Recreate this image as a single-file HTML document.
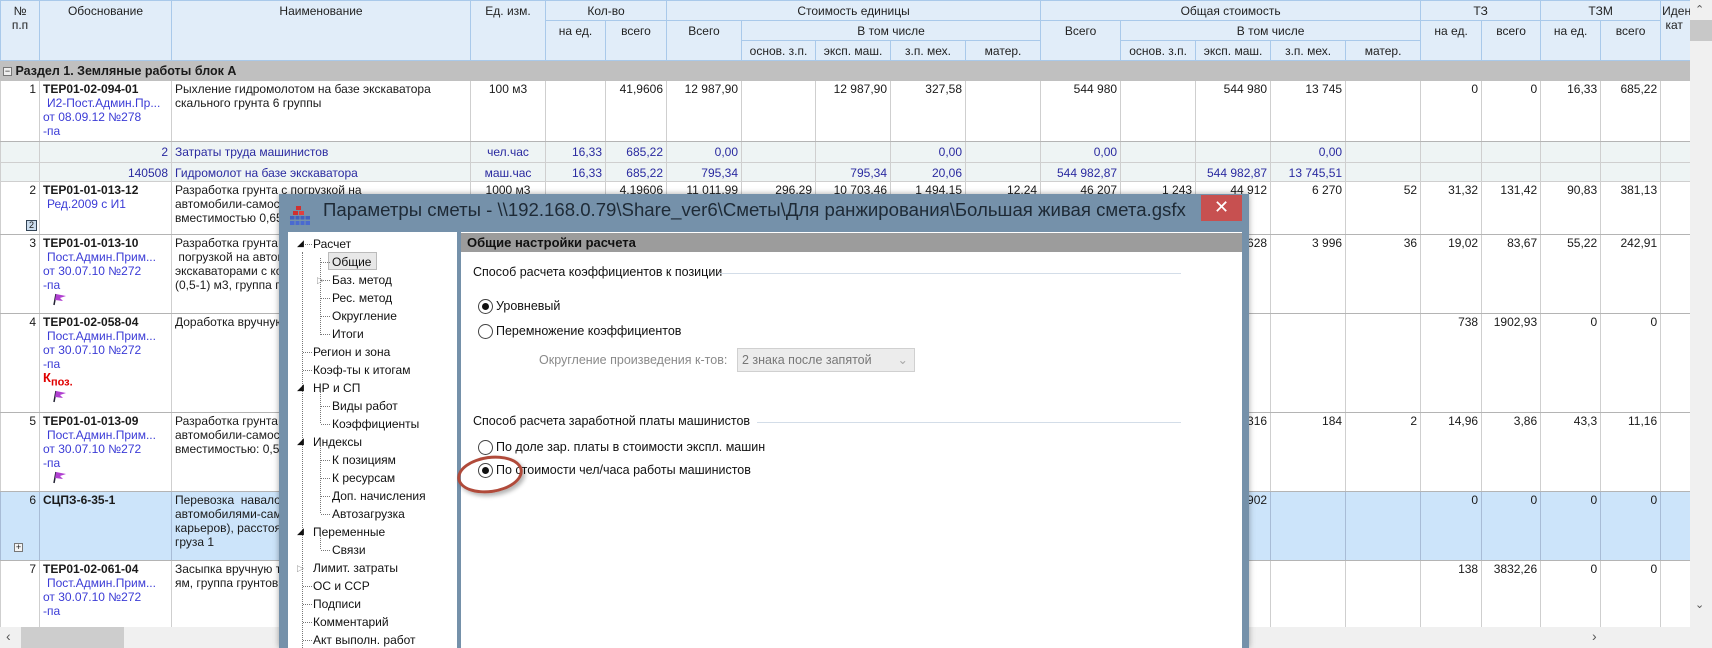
<!DOCTYPE html>
<html><head><meta charset="utf-8">
<style>
*{box-sizing:border-box;margin:0;padding:0}
html{width:1712px;height:648px;overflow:hidden}
body{width:1712px;height:648px;overflow:hidden;background:#fff;position:relative;font-family:"Liberation Sans","DejaVu Sans",sans-serif;font-size:12px;color:#1a1a1a}
table.g{position:absolute;left:0;top:0;border-collapse:collapse;table-layout:fixed;width:1690px}
table.g td,table.g th{border:1px solid #cfcfcf;padding:1px 3px;vertical-align:top;overflow:hidden;white-space:nowrap;line-height:14px}
table.g th{background:#e1edf9;border:1px solid #a9c9ea;font-weight:normal;text-align:center;color:#222;padding-top:3px}
tr.hd{height:20px}
td.r{text-align:right}
td.c{text-align:center}
.b{font-weight:bold}
.bl{color:#3b3bd6;padding-left:4px}
tr.sec td{background:#c0c0c0;font-weight:bold;font-size:12.5px;padding-top:3px;border-color:#c0c0c0}
tr.res td{background:#eef4f4;color:#2a2aa0;padding-top:3px}
tr.sel td{background:#cce4fa;border-color:#a8bcd6}
tr.main td{border-top:1px solid #b4b4b4;border-bottom:1px solid #b4b4b4}
.gr{color:#999}
.vs{position:absolute;left:1690px;top:0;width:22px;height:628px;background:#f0f0f0}
.hs{position:absolute;left:0;top:627px;width:1712px;height:21px;background:#f0f0f0}
.dlg{position:absolute;left:279px;top:194px;width:970px;height:454px;background:#7591aa;box-shadow:0 0 6px rgba(0,0,0,.35);overflow:hidden}
.ttl{position:absolute;left:44px;top:5px;font-size:18.6px;color:#1e2a36;white-space:nowrap}
.cls{position:absolute;left:922px;top:1px;width:41px;height:26px;background:#c75050;color:#fff;text-align:center;font-size:18px;line-height:25px;font-weight:bold}
.tree{position:absolute;left:9px;top:38px;width:169px;height:440px;background:#fff}
.rp{position:absolute;left:182px;top:38px;width:781px;height:440px;background:#fff}
.rph{position:absolute;left:0;top:1px;width:781px;height:19px;background:#9c9c9c;font-weight:bold;font-size:13px;padding:2px 6px;color:#111}
.ti{position:absolute;white-space:nowrap;font-size:12px;line-height:16px;color:#111}
.dv{position:absolute;border-left:1px dotted #777;width:0}
.dh{position:absolute;border-top:1px dotted #777;height:0}
.rad{position:absolute;width:15px;height:15px;border:1px solid #444;border-radius:50%;background:#fff}
.rad.on::after{content:"";position:absolute;left:3px;top:3px;width:7px;height:7px;border-radius:50%;background:#111}
.lbl{position:absolute;white-space:nowrap;font-size:12.5px;color:#111}
</style></head><body>

<table class="g">
<colgroup>
<col style="width:39px"><col style="width:132px"><col style="width:299px"><col style="width:75px"><col style="width:60px"><col style="width:61px"><col style="width:75px"><col style="width:74px"><col style="width:75px"><col style="width:75px"><col style="width:75px"><col style="width:80px"><col style="width:75px"><col style="width:75px"><col style="width:75px"><col style="width:75px"><col style="width:61px"><col style="width:59px"><col style="width:60px"><col style="width:60px"><col style="width:30px">
</colgroup>
<tr class="hd"><th rowspan="3">№<br>п.п</th><th rowspan="3">Обоснование</th><th rowspan="3">Наименование</th><th rowspan="3">Ед. изм.</th><th colspan="2">Кол-во</th><th colspan="5">Стоимость единицы</th><th colspan="5">Общая стоимость</th><th colspan="2">ТЗ</th><th colspan="2">ТЗМ</th><th rowspan="3" style="text-align:left;padding-left:1px">Иден<br>&nbsp;кат</th></tr>
<tr class="hd"><th rowspan="2">на ед.</th><th rowspan="2">всего</th><th rowspan="2">Всего</th><th colspan="4">В том числе</th><th rowspan="2">Всего</th><th colspan="4">В том числе</th><th rowspan="2">на ед.</th><th rowspan="2">всего</th><th rowspan="2">на ед.</th><th rowspan="2">всего</th></tr>
<tr class="hd"><th>основ. з.п.</th><th>эксп. маш.</th><th>з.п. мех.</th><th>матер.</th><th>основ. з.п.</th><th>эксп. маш.</th><th>з.п. мех.</th><th>матер.</th></tr>
<tr class="sec" style="height:20px"><td colspan="21" style="padding-left:2px"><span style="display:inline-block;width:9px;height:9px;border:1px solid #777;font-size:9px;line-height:7px;text-align:center;font-weight:normal;background:#eee;vertical-align:1px">−</span> Раздел 1. Земляные работы блок А</td></tr>
<tr class="main" style="height:61px"><td class="r">1</td><td><span class="b">ТЕР01-02-094-01</span><br><span class="bl">И2-Пост.Админ.Пр...<br>от 08.09.12 №278<br>-па</span></td><td>Рыхление гидромолотом на базе экскаватора<br>скального грунта 6 группы</td><td class="c">100 м3</td><td></td><td class="r">41,9606</td><td class="r">12 987,90</td><td></td><td class="r">12 987,90</td><td class="r">327,58</td><td></td><td class="r">544 980</td><td></td><td class="r">544 980</td><td class="r">13 745</td><td></td><td class="r">0</td><td class="r">0</td><td class="r">16,33</td><td class="r">685,22</td><td></td></tr>
<tr class="res" style="height:21px"><td></td><td class="r">2</td><td>Затраты труда машинистов</td><td class="c">чел.час</td><td class="r">16,33</td><td class="r">685,22</td><td class="r">0,00</td><td></td><td></td><td class="r">0,00</td><td></td><td class="r">0,00</td><td></td><td></td><td class="r">0,00</td><td></td><td></td><td></td><td></td><td></td><td></td></tr>
<tr class="res" style="height:19px"><td></td><td class="r">140508</td><td>Гидромолот на базе экскаватора</td><td class="c">маш.час</td><td class="r">16,33</td><td class="r">685,22</td><td class="r">795,34</td><td></td><td class="r">795,34</td><td class="r gr">20,06</td><td></td><td class="r">544 982,87</td><td></td><td class="r">544 982,87</td><td class="r gr">13 745,51</td><td></td><td></td><td></td><td></td><td></td><td></td></tr>
<tr class="main" style="height:53px"><td class="r" style="position:relative">2<span style="position:absolute;left:25px;top:38px;width:11px;height:11px;border:1px solid #345;background:#cde;font-size:9px;line-height:9px;text-align:center">2</span></td><td><span class="b">ТЕР01-01-013-12</span><br><span class="bl">Ред.2009 с И1</span></td><td>Разработка грунта с погрузкой на<br>автомобили-самосвалы экскаваторами<br>вместимостью 0,65</td><td class="c">1000 м3</td><td></td><td class="r">4,19606</td><td class="r">11 011,99</td><td class="r">296,29</td><td class="r">10 703,46</td><td class="r">1 494,15</td><td class="r">12,24</td><td class="r">46 207</td><td class="r">1 243</td><td class="r">44 912</td><td class="r">6 270</td><td class="r">52</td><td class="r">31,32</td><td class="r">131,42</td><td class="r">90,83</td><td class="r">381,13</td><td></td></tr>
<tr class="main" style="height:79px"><td class="r">3</td><td><span class="b">ТЕР01-01-013-10</span><br><span class="bl">Пост.Админ.Прим...<br>от 30.07.10 №272<br>-па</span><br><svg width="16" height="14" style="margin-left:8px"><path d="M3 13 L5 2" stroke="#223" stroke-width="1.5"/><path d="M5 2 L15 4 L9 6 L12 9 L4 8Z" fill="#b040d0"/></svg></td><td>Разработка грунта с<br>&nbsp;погрузкой на автомобили-самосвалы<br>экскаваторами с ковшом<br>(0,5-1) м3, группа грунтов</td><td></td><td></td><td></td><td></td><td></td><td></td><td></td><td></td><td></td><td></td><td class="r">44 628</td><td class="r">3 996</td><td class="r">36</td><td class="r">19,02</td><td class="r">83,67</td><td class="r">55,22</td><td class="r">242,91</td><td></td></tr>
<tr class="main" style="height:99px"><td class="r">4</td><td><span class="b">ТЕР01-02-058-04</span><br><span class="bl">Пост.Админ.Прим...<br>от 30.07.10 №272<br>-па</span><br><span style="color:#e00000;font-weight:bold;font-size:13px">К</span><sub style="color:#e00000;font-weight:bold;font-size:11px">поз.</sub><br><svg width="16" height="14" style="margin-left:8px"><path d="M3 13 L5 2" stroke="#223" stroke-width="1.5"/><path d="M5 2 L15 4 L9 6 L12 9 L4 8Z" fill="#b040d0"/></svg></td><td>Доработка вручную</td><td></td><td></td><td></td><td></td><td></td><td></td><td></td><td></td><td></td><td></td><td></td><td></td><td></td><td class="r">738</td><td class="r">1902,93</td><td class="r">0</td><td class="r">0</td><td></td></tr>
<tr class="main" style="height:79px"><td class="r">5</td><td><span class="b">ТЕР01-01-013-09</span><br><span class="bl">Пост.Админ.Прим...<br>от 30.07.10 №272<br>-па</span><br><svg width="16" height="14" style="margin-left:8px"><path d="M3 13 L5 2" stroke="#223" stroke-width="1.5"/><path d="M5 2 L15 4 L9 6 L12 9 L4 8Z" fill="#b040d0"/></svg></td><td>Разработка грунта с погрузкой на<br>автомобили-самосвалы<br>вместимостью: 0,5</td><td></td><td></td><td></td><td></td><td></td><td></td><td></td><td></td><td></td><td></td><td class="r">8 316</td><td class="r">184</td><td class="r">2</td><td class="r">14,96</td><td class="r">3,86</td><td class="r">43,3</td><td class="r">11,16</td><td></td></tr>
<tr class="main sel" style="height:69px"><td class="r" style="position:relative">6<span style="position:absolute;left:13px;top:51px;width:9px;height:9px;border:1px solid #777;background:#f4f4f4;font-size:9px;line-height:7px;text-align:center">+</span></td><td><span class="b">СЦПЗ-6-35-1</span></td><td>Перевозка&nbsp; навалочных грузов<br>автомобилями-самосвалами (из<br>карьеров), расстояние<br>груза 1</td><td></td><td></td><td></td><td></td><td></td><td></td><td></td><td></td><td></td><td></td><td class="r">1 902</td><td></td><td></td><td class="r">0</td><td class="r">0</td><td class="r">0</td><td class="r">0</td><td></td></tr>
<tr class="main" style="height:67px"><td class="r">7</td><td><span class="b">ТЕР01-02-061-04</span><br><span class="bl">Пост.Админ.Прим...<br>от 30.07.10 №272<br>-па</span></td><td>Засыпка вручную траншей, пазух котлованов и<br>ям, группа грунтов</td><td></td><td></td><td></td><td></td><td></td><td></td><td></td><td></td><td></td><td></td><td></td><td></td><td></td><td class="r">138</td><td class="r">3832,26</td><td class="r">0</td><td class="r">0</td><td></td></tr>
</table>

<div class="vs"><div style="position:absolute;left:5px;top:3px;font-size:11px;color:#555">&#8963;</div><div style="position:absolute;left:0;top:20px;width:22px;height:21px;background:#c8c8c8"></div><div style="position:absolute;left:5px;top:598px;font-size:11px;color:#555">&#8964;</div></div>
<div class="hs"><div style="position:absolute;left:6px;top:1px;font-size:14px;color:#555">&lsaquo;</div><div style="position:absolute;left:21px;top:0;width:103px;height:21px;background:#cdcdcd"></div><div style="position:absolute;left:1592px;top:1px;font-size:14px;color:#555">&rsaquo;</div></div>

<div class="dlg">
 <svg style="position:absolute;left:11px;top:11px" width="20" height="20"><rect x="6" y="1" width="5" height="4" fill="#d03030"/><rect x="3" y="6" width="5" height="4" fill="#d03030"/><rect x="9" y="6" width="5" height="4" fill="#e04040"/><rect x="0" y="11" width="20" height="4" fill="#4060c0"/><rect x="0" y="16" width="20" height="4" fill="#4a6ad0"/><path d="M0 15h20M5 11v9M10 11v9M15 11v9" stroke="#7591aa" stroke-width="1"/></svg>
 <div class="ttl">Параметры сметы - \\192.168.0.79\Share_ver6\Сметы\Для ранжирования\Большая живая смета.gsfx</div>
 <div class="cls">✕</div>
 <div class="tree">
  <div class="dv" style="left:14px;top:20px;height:420px"></div>
  <div class="dv" style="left:32px;top:26px;height:77px"></div>
  <div class="dv" style="left:32px;top:160px;height:31px"></div>
  <div class="dv" style="left:32px;top:214px;height:67px"></div>
  <div class="dv" style="left:32px;top:304px;height:13px"></div>
  <div class="dh" style="left:15px;top:12px;width:9px"></div><div class="ti" style="left:9px;top:3px;font-size:9px">◢</div><div class="ti" style="left:25px;top:4px">Расчет</div>
  <div style="position:absolute;left:40px;top:20px;width:49px;height:18px;background:#e8e8e8;border:1px solid #bbb"></div>
  <div class="dh" style="left:33px;top:30px;width:9px"></div><div class="ti" style="left:44px;top:22px">Общие</div>
  <div class="dh" style="left:33px;top:48px;width:9px"></div><div class="ti" style="left:29px;top:40px;font-size:9px;color:#999">▷</div><div class="ti" style="left:44px;top:40px">Баз. метод</div>
  <div class="dh" style="left:33px;top:66px;width:9px"></div><div class="ti" style="left:44px;top:58px">Рес. метод</div>
  <div class="dh" style="left:33px;top:84px;width:9px"></div><div class="ti" style="left:44px;top:76px">Округление</div>
  <div class="dh" style="left:33px;top:102px;width:9px"></div><div class="ti" style="left:44px;top:94px">Итоги</div>
  <div class="dh" style="left:15px;top:120px;width:9px"></div><div class="ti" style="left:25px;top:112px">Регион и зона</div>
  <div class="dh" style="left:15px;top:138px;width:9px"></div><div class="ti" style="left:25px;top:130px">Коэф-ты к итогам</div>
  <div class="ti" style="left:9px;top:147px;font-size:9px">◢</div><div class="ti" style="left:25px;top:148px">НР и СП</div>
  <div class="dh" style="left:33px;top:174px;width:9px"></div><div class="ti" style="left:44px;top:166px">Виды работ</div>
  <div class="dh" style="left:33px;top:192px;width:9px"></div><div class="ti" style="left:44px;top:184px">Коэффициенты</div>
  <div class="ti" style="left:9px;top:201px;font-size:9px">◢</div><div class="ti" style="left:25px;top:202px">Индексы</div>
  <div class="dh" style="left:33px;top:228px;width:9px"></div><div class="ti" style="left:44px;top:220px">К позициям</div>
  <div class="dh" style="left:33px;top:246px;width:9px"></div><div class="ti" style="left:44px;top:238px">К ресурсам</div>
  <div class="dh" style="left:33px;top:264px;width:9px"></div><div class="ti" style="left:44px;top:256px">Доп. начисления</div>
  <div class="dh" style="left:33px;top:282px;width:9px"></div><div class="ti" style="left:44px;top:274px">Автозагрузка</div>
  <div class="ti" style="left:9px;top:291px;font-size:9px">◢</div><div class="ti" style="left:25px;top:292px">Переменные</div>
  <div class="dh" style="left:33px;top:318px;width:9px"></div><div class="ti" style="left:44px;top:310px">Связи</div>
  <div class="ti" style="left:9px;top:328px;font-size:9px;color:#999">▷</div><div class="ti" style="left:25px;top:328px">Лимит. затраты</div>
  <div class="dh" style="left:15px;top:354px;width:9px"></div><div class="ti" style="left:25px;top:346px">ОС и ССР</div>
  <div class="dh" style="left:15px;top:372px;width:9px"></div><div class="ti" style="left:25px;top:364px">Подписи</div>
  <div class="dh" style="left:15px;top:390px;width:9px"></div><div class="ti" style="left:25px;top:382px">Комментарий</div>
  <div class="dh" style="left:15px;top:408px;width:9px"></div><div class="ti" style="left:25px;top:400px">Акт выполн. работ</div>
 </div>
 <div class="rp">
  <div class="rph">Общие настройки расчета</div>
  <div class="lbl" style="left:12px;top:33px">Способ расчета коэффициентов к позиции</div>
  <div style="position:absolute;left:258px;top:41px;width:462px;border-top:1px solid #d3dde8"></div>
  <div class="rad on" style="left:17px;top:67px"></div><div class="lbl" style="left:35px;top:67px">Уровневый</div>
  <div class="rad" style="left:17px;top:92px"></div><div class="lbl" style="left:35px;top:92px">Перемножение коэффициентов</div>
  <div class="lbl" style="left:78px;top:121px;color:#8a8a8a">Округление произведения к-тов:</div>
  <div style="position:absolute;left:276px;top:116px;width:178px;height:24px;background:#ececec;border:1px solid #d0d0d0;color:#777;padding:4px 4px;font-size:12.5px">2 знака после запятой<span style="position:absolute;right:6px;top:3px;color:#aaa">&#8964;</span></div>
  <div class="lbl" style="left:12px;top:182px">Способ расчета заработной платы машинистов</div>
  <div style="position:absolute;left:296px;top:190px;width:424px;border-top:1px solid #d3dde8"></div>
  <div class="rad" style="left:17px;top:208px"></div><div class="lbl" style="left:35px;top:208px">По доле зар. платы в стоимости экспл. машин</div>
  <div class="rad on" style="left:17px;top:231px"></div><div class="lbl" style="left:35px;top:231px">По стоимости чел/часа работы машинистов</div>
  <div style="position:absolute;left:-4px;top:224px;width:66px;height:37px;border:3px solid #b04a3a;border-radius:50%;transform:rotate(-8deg);box-shadow:2px 3px 4px rgba(0,0,0,.3)"></div>
 </div>
</div>
</body></html>
